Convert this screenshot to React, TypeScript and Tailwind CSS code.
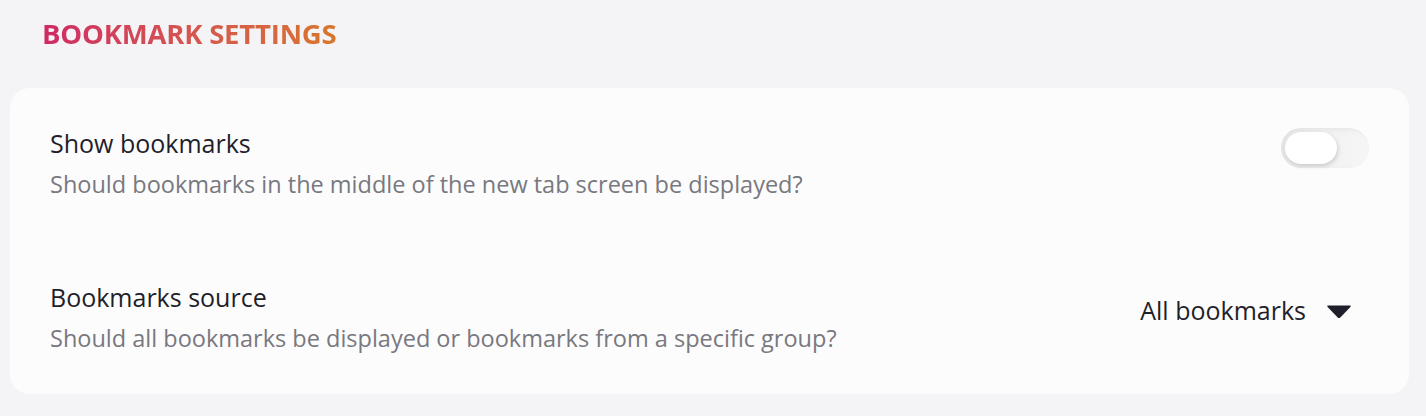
import React from "react";

export default function App() {
  return (
    <div
      className="min-h-[416px] w-full bg-[#f4f4f6] pl-[10px] pr-[17px] pt-[18px] pb-[23px]"
      style={{ fontFamily: '"Open Sans", "Noto Sans", sans-serif' }}
    >
      <h1 className="ml-[32px] w-fit text-[27.5px] leading-[32px] font-bold tracking-[-0.2px] text-transparent bg-clip-text bg-gradient-to-r from-[#cf2864] to-[#d9752a]">
        BOOKMARK SETTINGS
      </h1>

      <div className="mt-[38px] rounded-[20px] bg-[#fcfcfc] px-[40px] pt-[37px] pb-[38px]">
        <div className="flex items-start justify-between">
          <div>
            <div className="text-[25px] leading-[36px] text-[#1f1f2b]">Show bookmarks</div>
            <div className="mt-[5px] text-[23.5px] leading-[36px] text-[#78787f]">
              Should bookmarks in the middle of the new tab screen be displayed?
            </div>
          </div>
          <div className="mt-[3px] h-[40px] w-[88px] rounded-full bg-gradient-to-r from-[#ececed] to-[#f6f6f7] shadow-[inset_2px_2px_5px_rgba(0,0,0,0.05)] p-[4px]">
            <div className="h-[32px] w-[52px] rounded-full bg-white shadow-[1px_2px_4px_rgba(0,0,0,0.16)]" />
          </div>
        </div>

        <div className="mt-[77px] flex items-start justify-between">
          <div>
            <div className="text-[25px] leading-[36px] text-[#1f1f2b]">Bookmarks source</div>
            <div className="mt-[5px] text-[23.5px] leading-[36px] text-[#78787f]">
              Should all bookmarks be displayed or bookmarks from a specific group?
            </div>
          </div>
          <div className="mt-[13px] mr-[17px] flex items-center gap-[20px]">
            <span className="text-[25px] leading-[36px] text-[#1f1f2b]">All bookmarks</span>
            <svg width="26" height="15" viewBox="0 0 26 15" className="mt-[2px]">
              <path
                d="M2.2 1.5 H23.8 Q25.6 1.5 24.4 2.9 L14.3 13.4 Q13 14.6 11.7 13.4 L1.6 2.9 Q0.4 1.5 2.2 1.5 Z"
                fill="#1f1f2b"
              />
            </svg>
          </div>
        </div>
      </div>
    </div>
  );
}
